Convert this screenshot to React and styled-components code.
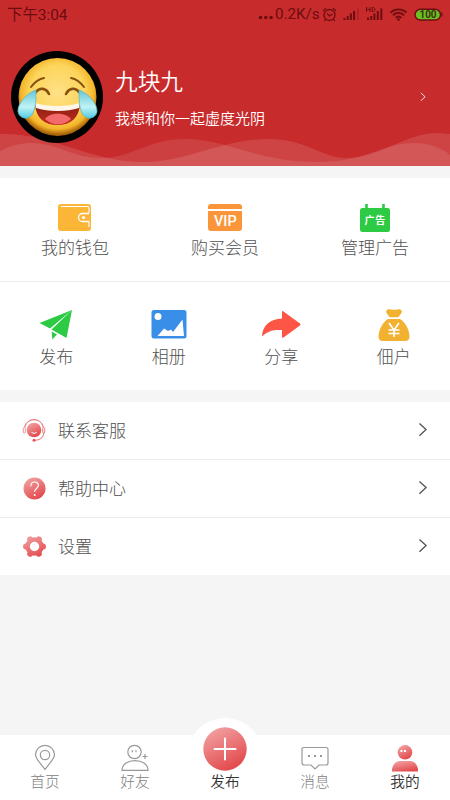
import React from 'react';
import styled, { createGlobalStyle } from 'styled-components';

const GlobalStyle = createGlobalStyle`
  * { box-sizing: border-box; }
  body {
    margin: 0;
    background: #f5f5f5;
    font-family: Roboto, "Noto Sans CJK SC", sans-serif;
    font-weight: 300;
    color: #505050;
  }
  svg { display: block; overflow: visible; flex-shrink: 0; }
`;

const Screen = styled.div`
  width: 450px;
  height: 800px;
  display: flex;
  flex-direction: column;
  overflow: hidden;
  background: #f5f5f5;
`;

const Header = styled.header`
  position: relative;
  height: 166px;
  flex-shrink: 0;
  background: #c82b2c;
  color: #fff;
`;

const Waves = styled.svg`
  position: absolute;
  left: 0;
  bottom: 0;
`;

const StatusBar = styled.div`
  height: 29px;
  padding: 0 7px;
  display: flex;
  align-items: center;
  justify-content: space-between;
  color: #6d0d10;
  font-weight: 400;
  line-height: 29px;
  white-space: nowrap;
`;

const Clock = styled.span`
  font-size: 15.4px;
  padding-top: 1px;
`;

const StatusRight = styled.div`
  display: flex;
  align-items: center;
`;

const Speed = styled.span`
  font-size: 15.2px;
  width: 44px;
`;

const Profile = styled.div`
  position: relative;
  display: flex;
  align-items: center;
  height: 92px;
  margin: 22px 24px 0 11px;
`;

const ProfileText = styled.div`
  flex: 1;
  margin-left: 12px;
  white-space: nowrap;
`;

const Name = styled.div`
  font-size: 22.7px;
  line-height: 34px;
  font-weight: 350;
  margin-top: 4px;
`;

const Motto = styled.div`
  font-size: 15px;
  line-height: 22px;
  margin-top: 8px;
  font-weight: 350;
  margin-bottom: 3px;
`;

const Panel = styled.section`
  margin-top: 12px;
  background: #fff;
  flex-shrink: 0;
`;

const Grid = styled.div`
  display: grid;
  grid-template-columns: repeat(${(p) => p.$cols}, 1fr);
  height: ${(p) => p.$height}px;
  padding-top: ${(p) => p.$top}px;
  border-bottom: ${(p) => (p.$line ? '1px solid #ebebeb' : '0')};
`;

const Cell = styled.div`
  display: flex;
  flex-direction: column;
  align-items: center;
  font-size: 17px;
  line-height: 24px;
  white-space: nowrap;
`;

const IconSlot = styled.div`
  height: ${(p) => p.$height}px;
  display: flex;
  align-items: center;
`;

const CellLabel = styled.span`
  margin-top: 4px;
`;

const Row = styled.div`
  display: flex;
  align-items: center;
  height: ${(p) => (p.$last ? 57 : 58)}px;
  padding: 0 22px;
  border-bottom: ${(p) => (p.$last ? '0' : '1px solid #ebebeb')};
  font-size: 17px;
  line-height: 24px;
`;

const RowLabel = styled.span`
  flex: 1;
  margin-left: 12px;
  padding-top: 1px;
`;

const RowArrow = styled.span`
  margin: 0 1px 2px 0;
`;

const TabBar = styled.nav`
  position: relative;
  display: grid;
  grid-template-columns: repeat(5, 1fr);
  grid-template-rows: 65px;
  height: 65px;
  margin-top: auto;
  background: #fff;
  flex-shrink: 0;
`;

const Bump = styled.div`
  position: absolute;
  left: 187px;
  top: -17px;
  width: 76px;
  height: 76px;
  border-radius: 50%;
  background: #fff;
`;

const Tab = styled.div`
  position: relative;
  display: flex;
  flex-direction: column;
  align-items: center;
  justify-content: flex-end;
  padding-bottom: 7px;
  font-size: 14.7px;
  line-height: 21px;
  color: ${(p) => (p.$active ? '#333' : '#808080')};
  font-weight: ${(p) => (p.$active ? 350 : 300)};
`;

const HiddenDefs = styled.svg.attrs({ width: 0, height: 0 })`
  position: absolute;
`;

const Gradients = () => (
  <HiddenDefs>
    <defs>
      <linearGradient id="rose" x1="0" y1="0" x2="0.5" y2="1">
        <stop offset="0" stopColor="#f3aaab" />
        <stop offset="1" stopColor="#e34d50" />
      </linearGradient>
    </defs>
  </HiddenDefs>
);

const StatusIcons = () => (
  <svg width="124" height="20" viewBox="320 4.500 124 20" fill="none" stroke="#6d0d10">
    <circle cx="330.500" cy="14.500" r="5.500" strokeWidth="1.300" />
    <path d="M328 13l2.500 2.500 3-2M324 10.500l3-3M337 10.500l-3-3M326.500 19l-1.300 1.500M334.500 19l1.300 1.500" strokeWidth="1.200" />
    <path d="M345.500 19.500v-2M348.700 19.500v-4M351.900 19.500v-6.500M355.100 19.500V10.500" strokeWidth="2" />
    <path d="M359 19.500V8" strokeWidth="1.500" opacity=".35" />
    <path d="M369 19.500v-2.500M372.200 19.500v-4M375.400 19.500V13M378.800 19.500V10.500M382.300 19.500V8" strokeWidth="2" />
    <path d="M367.500 6.500v5M371 6.500v5M367.500 9h3.500M373.200 7v4h.8c2.600 0 2.600-4 0-4z" strokeWidth="1" />
    <path d="M391.500 12c4.800-4.200 11.200-4.200 16 0M394 14.800c3.300-3 7.700-3 11 0M396.700 17.300c1.800-1.600 3.800-1.600 5.600 0" strokeWidth="1.900" />
    <circle cx="399.500" cy="19" r="1.300" fill="#6d0d10" stroke="none" />
    <rect x="416" y="8.800" width="25.500" height="10.800" rx="5.400" fill="#69bf24" strokeWidth="1.500" />
    <path d="M443 12v4" strokeWidth="1.200" />
    <text x="429" y="17.800" textAnchor="middle" fontSize="10" fontWeight="700" fontFamily="Roboto, sans-serif" fill="#3d3309" stroke="none">100</text>
  </svg>
);

const Dots = () => (
  <svg width="17" height="20" viewBox="0 0 17 20" fill="#6d0d10">
    <circle cx="2.500" cy="12.500" r="1.800" /><circle cx="7.800" cy="12.500" r="1.800" /><circle cx="13.100" cy="12.500" r="1.800" />
  </svg>
);

const Avatar = () => (
  <svg width="92" height="92" viewBox="0 0 92 92">
    <defs>
      <radialGradient id="face" cx=".5" cy=".44" r=".54">
        <stop offset="0" stopColor="#ffe187" />
        <stop offset=".65" stopColor="#fcd55b" />
        <stop offset=".87" stopColor="#f4b52a" />
        <stop offset="1" stopColor="#a9640a" />
      </radialGradient>
      <linearGradient id="tear" x1="0" y1="0" x2="0" y2="1">
        <stop offset="0" stopColor="#65c5d6" />
        <stop offset=".6" stopColor="#bff3f5" />
        <stop offset="1" stopColor="#54cbe1" />
      </linearGradient>
      <linearGradient id="mouth" x1="0" y1="0" x2="0" y2="1">
        <stop offset="0" stopColor="#861e13" />
        <stop offset="1" stopColor="#c52c1d" />
      </linearGradient>
    </defs>
    <circle cx="46" cy="46" r="46" fill="#000" />
    <circle cx="46.500" cy="46" r="39" fill="url(#face)" />
    <path d="M24 53c13 5 32 5 45 0-1 14-9 21-22.500 21S25 67 24 53z" fill="url(#mouth)" />
    <path d="M24 52c13 4 32 4 45 0l-1 5c-12 4-31 4-43 0z" fill="#fff6ea" />
    <path d="M34 68c5-7 20-7 26 0-7 7-19 7-26 0z" fill="#f36a6c" />
    <g fill="none" stroke="#87510d" strokeLinecap="round">
      <path d="M20 36c3-4 7-8 13-9M73 36c-3-4-7-8-13-9" strokeWidth="2" />
      <path d="M25 41c4-5 10-4 13 2M55 43c3-6 9-7 13-2" strokeWidth="2.600" />
    </g>
    <path d="M25 39c-9 3-19 14-18 22 2 8 12 8 15 1 3-6 3-15 3-23z" fill="url(#tear)" stroke="#54b5c5" strokeWidth=".7" />
    <path d="M68 39c9 3 19 14 18 22-2 8-12 8-15 1-3-6-3-15-3-23z" fill="url(#tear)" stroke="#54b5c5" strokeWidth=".7" />
  </svg>
);

const WaveArt = () => (
  <Waves width="450" height="36" viewBox="0 130 450 36" fill="#fff">
    <path d="M0 134C50 132 90 162 143 162C188 162 222 139 268 139C308 139 320 158 347 158C380 158 405 133 438 133L450 134V166H0z" opacity=".12" />
    <path d="M0 151C12 145 21 143 31 143C57 143 73 158 101 158C133 158 147 139 185 139C229 139 255 162 318 162C367 162 382 143 414 143C430 143 442 148 450 155V166H0z" opacity=".1" />
  </Waves>
);

const Chevron = ({ size = 9.5, color = '#555' }) => (
  <svg width={size} height={size * 1.6} viewBox="0 0 10 16" fill="none" stroke={color} strokeWidth="1.400">
    <path d="M1.500 1.500L8.500 8l-7 6.500" />
  </svg>
);

const Wallet = () => (
  <svg width="36" height="28" viewBox="0 0 36 28">
    <rect x="1" y="0" width="33" height="27" rx="3" fill="#fbb638" />
    <path d="M4 2.500h26q2 0 2 2V9M32 17.500V23" fill="none" stroke="#fff" strokeWidth="1.100" />
    <path d="M32 9.500H25.500a4 4 0 0 0 0 8H32" fill="none" stroke="#fff" strokeWidth="1.300" />
    <circle cx="26.500" cy="13.500" r="1.600" fill="#fff" />
  </svg>
);

const Vip = () => (
  <svg width="36" height="28" viewBox="0 0 36 28">
    <path d="M1 5V3q0-3 3-3h28q3 0 3 3v2zM1 7h34v17q0 3-3 3H4q-3 0-3-3z" fill="#fb953a" />
    <text x="18.300" y="22" textAnchor="middle" fontSize="14.500" fontWeight="500" fontFamily="Roboto, sans-serif" fill="#fff">VIP</text>
  </svg>
);

const Ad = () => (
  <svg width="32" height="28" viewBox="0 0 32 28">
    <rect x="1" y="4" width="30" height="24" rx="2.500" fill="#2dcb43" />
    <path d="M7.500 0v6M24.500 0v6" stroke="#2dcb43" strokeWidth="2.600" />
    <text x="16.300" y="19.800" textAnchor="middle" fontSize="10" letterSpacing=".8" fontWeight="700" fontFamily="Noto Sans CJK SC, sans-serif" fill="#fff">广告</text>
  </svg>
);

const Plane = () => (
  <svg width="34" height="31" viewBox="0 0 34 31" fill="#2dcb43">
    <path d="M33 0L.5 13 11 18.500zM33 0L12.500 19.500 27.500 28zM12.700 21.500l5.300 3-4.700 5z" />
  </svg>
);

const Album = () => (
  <svg width="36" height="31" viewBox="0 0 36 31">
    <rect x=".5" y="0" width="35" height="28.500" rx="2.500" fill="#398ee8" />
    <circle cx="7" cy="6.500" r="3.500" fill="#fff" />
    <path d="M6.500 26l6.500-7.500 4 2.500 3-1.500 2 2.500L31.500 9.500 33 26z" fill="#fff" />
  </svg>
);

const Share = () => (
  <svg width="40" height="31" viewBox="0 0 40 31">
    <path d="M21 2q0-1.500 1.500-.5l16.500 12q1 1 0 2L22.500 27.500q-1.500 1-1.500-1V20C12 19.500 6.500 21 1 26.500 1.500 15.500 9 9 21 8.500z" fill="#fd5647" />
  </svg>
);

const MoneyBag = () => (
  <svg width="32" height="32" viewBox="0 0 32 32">
    <path d="M8.500 1.500C10-1 12.500 1 16 .8 20 1 21.500-1 23.500 1.500 25 4 21.500 5.500 20.500 8.300h-9C10.500 5.500 7 4 8.500 1.500z" fill="#f3b132" />
    <path d="M10 10h12c5 3 9 10 9.500 17 .2 3-1.500 5-4.500 5H5c-3 0-4.700-2-4.500-5C1 20 5 13 10 10z" fill="#f3b132" />
    <path d="M11 14l5 7 5-7M16 20.500v7.500M10.500 21h11M10.500 24.500h11" fill="none" stroke="#fff" strokeWidth="1.700" />
  </svg>
);

const Support = () => (
  <svg width="24" height="24" viewBox="0 0 24 24">
    <circle cx="12" cy="11" r="7.300" fill="url(#rose)" />
    <path d="M2.500 8.500C5-2 19-2 21.500 8.500M22 14c-.5 4-4 7-9 7.200" fill="none" stroke="#e87779" strokeWidth="1.100" />
    <rect x="1.300" y="8.500" width="2" height="5.500" rx="1" fill="#fff" stroke="#e98b8d" strokeWidth=".9" />
    <rect x="20.700" y="8.500" width="2" height="5.500" rx="1" fill="#fff" stroke="#e76c6e" strokeWidth=".9" />
    <circle cx="12" cy="21.300" r="1.500" fill="#e4585b" />
    <path d="M9.500 13.500q2.500 1.800 5 0" stroke="#fff" fill="none" />
  </svg>
);

const Help = () => (
  <svg width="24" height="24" viewBox="0 0 24 24">
    <circle cx="12.500" cy="11.500" r="11" fill="url(#rose)" />
    <path d="M8.900 8.800c0-5 7.500-5 7.500-.5 0 3-3.700 3.200-3.700 6" fill="none" stroke="#fff" strokeWidth="1.200" strokeLinecap="round" />
    <circle cx="12.700" cy="18" r="1" fill="#fff" />
  </svg>
);

const Gear = () => (
  <svg width="24" height="24" viewBox="0 0 24 24">
    <mask id="gearShape">
      <circle cx="12.500" cy="11.500" r="9.300" fill="#fff" />
      <g stroke="#fff" strokeWidth="6" strokeLinecap="round">
        <path d="M4 11.500h17M8.200 4.300l8.600 14.400M16.800 4.300L8.200 18.700" />
      </g>
      <circle cx="12.500" cy="11.500" r="4.700" fill="#000" />
    </mask>
    <rect x=".5" y="0" width="24" height="23.500" fill="url(#rose)" mask="url(#gearShape)" />
  </svg>
);

const TabIcon = styled.svg.attrs({ width: 30, height: 28 })`
  fill: none;
  margin-bottom: 1px;
`;

const Pin = () => (
  <TabIcon viewBox="0 0 30 28" stroke="#999" strokeWidth="1.200">
    <path d="M15 26.500C11 20.500 5.500 16 5.500 11.800a9.500 9.500 0 0 1 19 0c0 4.200-5.500 8.700-9.500 14.700z" />
    <circle cx="15" cy="12" r="4.700" />
  </TabIcon>
);

const Friend = () => (
  <TabIcon viewBox="0 0 30 28" stroke="#999" strokeWidth="1.200">
    <circle cx="14.500" cy="9" r="6.700" />
    <path d="M2 27.300c0-13 26-13 26 0zM22.500 13.500h5M25 11v5M12.300 7.300v2M16 7.300v2" />
  </TabIcon>
);

const Publish = styled.svg.attrs({ width: 44, height: 44 })`
  margin-bottom: 1px;
`;

const Message = () => (
  <TabIcon viewBox="0 0 30 28" stroke="#999" strokeWidth="1.200">
    <path d="M4 4.500h22q2 0 2 2V20q0 2-2 2h-7L15 26l-4-4H4q-2 0-2-2V6.500q0-2 2-2z" />
    <path d="M8 13h2M14 13h2M20 13h2" strokeWidth="2" />
  </TabIcon>
);

const Me = () => (
  <TabIcon viewBox="0 0 30 28">
    <circle cx="15" cy="9.300" r="7.300" fill="url(#rose)" />
    <path d="M2 28.500V26c1-5 4-8 8-8h10c4 0 7 3 8 8v2.500z" fill="url(#rose)" />
    <path d="M10.500 8h2M14 8h2" stroke="#fff" strokeWidth="2" />
  </TabIcon>
);

const mainActions = [
  ['我的钱包', Wallet],
  ['购买会员', Vip],
  ['管理广告', Ad],
];
const moreActions = [
  ['发布', Plane],
  ['相册', Album],
  ['分享', Share],
  ['佃户', MoneyBag],
];
const settings = [
  ['联系客服', Support],
  ['帮助中心', Help],
  ['设置', Gear],
];

const ActionGrid = ({ items, height, top, iconHeight, line }) => (
  <Grid $cols={items.length} $height={height} $top={top} $line={line}>
    {items.map(([label, Icon]) => (
      <Cell key={label}>
        <IconSlot $height={iconHeight}><Icon /></IconSlot>
        <CellLabel>{label}</CellLabel>
      </Cell>
    ))}
  </Grid>
);

export default function App() {
  return (
    <>
      <GlobalStyle />
      <Gradients />
      <Screen>
        <Header>
          <WaveArt />
          <StatusBar>
            <Clock>下午3:04</Clock>
            <StatusRight>
              <Dots />
              <Speed>0.2K/s</Speed>
              <StatusIcons />
            </StatusRight>
          </StatusBar>
          <Profile>
            <Avatar />
            <ProfileText>
              <Name>九块九</Name>
              <Motto>我想和你一起虚度光阴</Motto>
            </ProfileText>
            <Chevron size={6} color="#fff" />
          </Profile>
        </Header>
        <Panel>
          <ActionGrid items={mainActions} height={104} top={26} iconHeight={28} line />
          <ActionGrid items={moreActions} height={108} top={27} iconHeight={32} />
        </Panel>
        <Panel>
          {settings.map(([label, Icon], i) => (
            <Row key={label} $last={i === settings.length - 1}>
              <Icon />
              <RowLabel>{label}</RowLabel>
              <RowArrow><Chevron /></RowArrow>
            </Row>
          ))}
        </Panel>
        <TabBar>
          <Bump />
          <Tab><Pin />首页</Tab>
          <Tab><Friend />好友</Tab>
          <Tab $active>
            <Publish viewBox="0 0 44 44">
              <circle cx="22" cy="22" r="21.700" fill="url(#rose)" />
              <path d="M11.500 22h21M22 11.500v21" stroke="#fff" strokeWidth="2" strokeLinecap="round" />
            </Publish>
            发布
          </Tab>
          <Tab><Message />消息</Tab>
          <Tab $active><Me />我的</Tab>
        </TabBar>
      </Screen>
    </>
  );
}
